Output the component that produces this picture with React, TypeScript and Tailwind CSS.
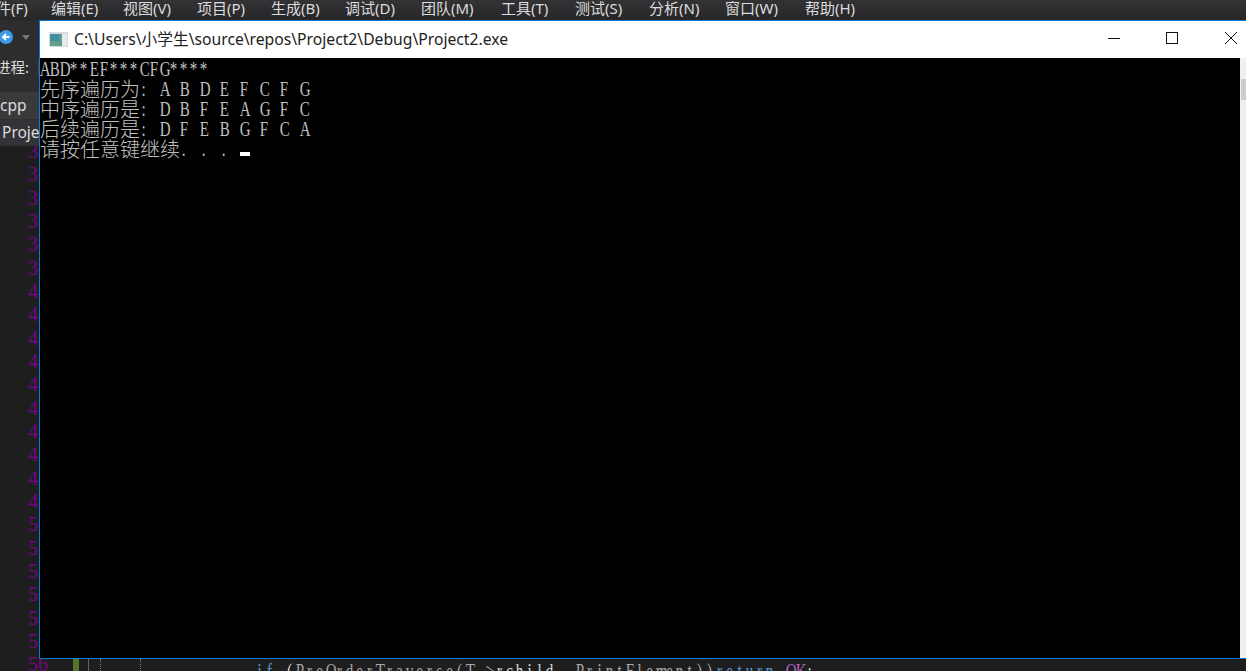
const menus = [
  { label: "件(F)", w: "-ml-[4px] w-[55px]" },
  { label: "编辑(E)", w: "w-[72px]" },
  { label: "视图(V)", w: "w-[74px]" },
  { label: "项目(P)", w: "w-[74px]" },
  { label: "生成(B)", w: "w-[74px]" },
  { label: "调试(D)", w: "w-[76px]" },
  { label: "团队(M)", w: "w-[80px]" },
  { label: "工具(T)", w: "w-[74px]" },
  { label: "测试(S)", w: "w-[74px]" },
  { label: "分析(N)", w: "w-[76px]" },
  { label: "窗口(W)", w: "w-[80px]" },
  { label: "帮助(H)", w: "w-[70px]" },
];

const lineNumbers = [35, 36, 37, 38, 39, 40, 41, 42, 43, 44, 45, 46, 47, 48, 49, 50, 51, 52, 53, 54, 55];

// console font is a 10px cell serif, so every latin char gets its own squeezed cell
const Mono = ({ text }: { text: string }) => (
  <>
    {text.split("").map((c, i) => (
      <span key={i} className="inline-block w-[10px] -translate-x-[1.5px] scale-x-[0.75] text-center font-['Liberation_Serif',serif] text-[20px]">
        {c === " " ? "\u00a0" : c}
      </span>
    ))}
  </>
);

const Cjk = ({ text }: { text: string }) => (
  <span className="font-['Noto_Sans_CJK_SC',sans-serif] text-[20px] font-light">{text}</span>
);

const Row = ({ children }: { children: React.ReactNode }) => (
  <div className="flex h-[20px] items-center overflow-hidden whitespace-pre leading-[20px]">{children}</div>
);

const Console = () => (
  <div className="absolute left-[39px] top-[20px] flex h-[639px] w-[1207px] flex-col border-t border-b border-l border-[#0a7ad6] bg-black">
    <div className="flex h-[37px] shrink-0 items-center bg-white pl-[9px]">
      <svg width="19" height="15" viewBox="0 0 19 15" className="shrink-0">
        <rect x="0" y="0" width="19" height="15" fill="#d6dbe0" />
        <rect x="1" y="2" width="17" height="12" fill="#5f9f8c" />
        <rect x="1" y="2" width="9" height="7" fill="#3f8fa0" />
        <rect x="13" y="2" width="5" height="12" fill="#e8ecef" />
      </svg>
      <span className="ml-[6px] font-['Noto_Sans','Noto_Sans_CJK_SC',sans-serif] text-[15.7px] text-[#222]">
        C:\Users\小学生\source\repos\Project2\Debug\Project2.exe
      </span>
      <div className="ml-auto flex items-center pb-[3px]">
        <svg width="14" height="14" viewBox="0 0 14 14" className="mr-[44px]">
          <path d="M1 7.5 H13" stroke="#111" fill="none" />
        </svg>
        <svg width="14" height="14" viewBox="0 0 14 14" className="mr-[45px]">
          <rect x="1.5" y="1.5" width="11" height="11" stroke="#111" fill="none" />
        </svg>
        <svg width="14" height="14" viewBox="0 0 14 14" className="mr-[8px]">
          <path d="M1 1 L13 13 M13 1 L1 13" stroke="#111" fill="none" />
        </svg>
      </div>
    </div>
    <div className="flex min-h-0 flex-1">
      <div className="min-w-0 flex-1 pt-[1px] text-[#c0c0c0]">
        <Row><Mono text="ABD**EF***CFG****" /></Row>
        <Row><Cjk text="先序遍历为" /><Mono text=": A B D E F C F G" /></Row>
        <Row><Cjk text="中序遍历是" /><Mono text=": D B F E A G F C" /></Row>
        <Row><Cjk text="后续遍历是" /><Mono text=": D F E B G F C A" /></Row>
        <Row>
          <Cjk text="请按任意键继续" />
          <Mono text=". . . " />
          <span className="mt-[10px] h-[4px] w-[10px] bg-white" />
        </Row>
      </div>
      <div className="flex w-[6px] shrink-0 flex-col bg-[#f0f0f0] pl-[1px]">
        <div className="mt-[21px] h-[21px] bg-[#cdcdcd]" />
      </div>
    </div>
  </div>
);

export default function App() {
  return (
    <div className="relative flex h-[671px] w-[1246px] flex-col overflow-hidden bg-[#1e1e1e] font-['Noto_Sans','Noto_Sans_CJK_SC',sans-serif] text-[#dcdcdc]">
      <div className="flex h-[20px] shrink-0 items-center bg-gradient-to-b from-[#333335] to-[#262628] pb-[3px] text-[15px] leading-[17px]">
        {menus.map((m) => (
          <span key={m.label} className={m.w}>
            {m.label}
          </span>
        ))}
      </div>
      <div className="flex h-[34px] shrink-0 items-center gap-[8px] bg-[#2d2d30]">
        <svg width="14" height="16" viewBox="0 0 14 16" className="shrink-0">
          <circle cx="6" cy="8" r="7" fill="#3d9be9" />
          <path d="M9.5 8 H3 M6 5 L3 8 L6 11" stroke="#fff" strokeWidth="1.8" fill="none" />
        </svg>
        <svg width="8" height="5" viewBox="0 0 8 5" className="shrink-0">
          <path d="M0 0 H8 L4 5 Z" fill="#777" />
        </svg>
      </div>
      <div className="flex h-[38px] w-[39px] shrink-0 items-center overflow-hidden whitespace-nowrap bg-[#2d2d30] pb-[10px] text-[14.5px]">
        <span className="-ml-[4px]">进程:</span>
        <span className="ml-auto h-[18px] w-px bg-[#444]" />
      </div>
      <div className="flex h-[27px] w-[39px] shrink-0 items-center overflow-hidden bg-[#3a3a3d] text-[15.5px]">cpp</div>
      <div className="flex h-[27px] w-[39px] shrink-0 items-center overflow-hidden whitespace-nowrap border-t border-b border-[#2d2d30] bg-[#333337] pl-[2px] text-[15.5px]">Proje</div>
      <div className="flex min-h-0 flex-1 flex-col overflow-hidden pl-[28px] font-['Liberation_Serif',serif] text-[20px] leading-[23.33px] text-[#6f0a80]">
        <div className="-mt-[6px]">34</div>
        {lineNumbers.map((n) => (
          <div key={n}>{n}</div>
        ))}
        <div>56</div>
      </div>
      <Console />
      <div className="absolute left-[73px] top-[659px] h-[12px] w-[6px] bg-[#55752f]" />
      <div className="absolute left-[88px] top-[659px] h-[12px] w-px bg-[#666]" />
      <div className="absolute left-[100px] top-[659px] h-[12px] border-l border-dotted border-[#777]" />
      <div className="absolute left-[140px] top-[659px] h-[12px] border-l border-dotted border-[#777]" />
      <div className="absolute left-[256px] top-[661px] flex h-[20px] items-center whitespace-pre leading-[20px]">
        <span className="text-[#569cd6]"><Mono text="if" /></span>
        <Mono text=" (" />
        <span className="text-[#a8a8a8]"><Mono text="PreOrderTraverse(T->" /></span>
        <Mono text="rchild" />
        <span className="text-[#a8a8a8]"><Mono text=", PrintElement))" /></span>
        <span className="text-[#569cd6]"><Mono text="return" /></span>
        <Mono text=" " />
        <span className="text-[#bd63c5]"><Mono text="OK" /></span>
        <Mono text=";" />
      </div>
    </div>
  );
}
